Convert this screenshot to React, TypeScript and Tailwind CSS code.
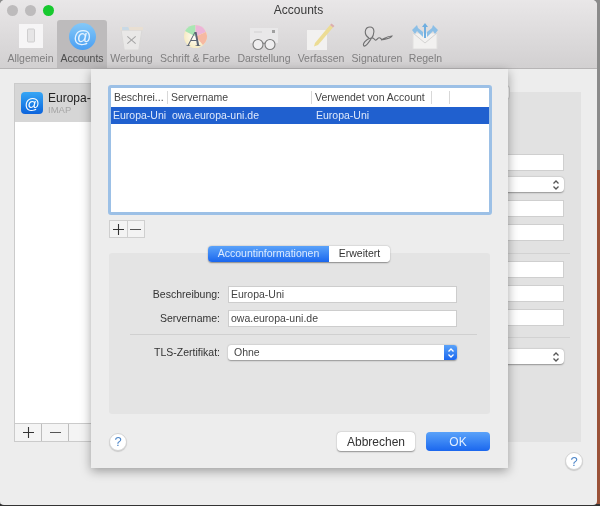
const font = { fontFamily: '"Liberation Sans", Arial, sans-serif' };

function AtIcon() {
  return (
    <svg width="40" height="40" viewBox="0 0 40 40">
      <defs>
        <linearGradient id="atg" x1="0" y1="0" x2="0" y2="1">
          <stop offset="0" stopColor="#84c8f8" />
          <stop offset="1" stopColor="#4a9ff2" />
        </linearGradient>
      </defs>
      <circle cx="20.500" cy="20.500" r="13.500" fill="url(#atg)" />
      <text x="20.500" y="26.500" textAnchor="middle" fontSize="18" fill="#e6f3ff" fontFamily="Liberation Sans">@</text>
    </svg>
  );
}

function GeneralIcon() {
  return (
    <svg width="24" height="24" viewBox="0 0 24 24">
      <rect width="24" height="24" fill="#f6f5f6" />
      <rect x="8.500" y="5" width="7" height="13" rx="1" fill="#e6e5e6" stroke="#cfcecf" />
    </svg>
  );
}

function TrashIcon() {
  return (
    <svg className="mt-[4px]" width="25" height="25" viewBox="0 0 24 24">
      <path d="M2 4h20l-3 19H5z" fill="#e9e8e7" stroke="#d9d8d7" />
      <path d="M1 1h22v3H1z" fill="#e9dfd2" />
      <path d="M3 1h6l1 3H3z" fill="#c8d9e6" />
      <path d="M8 10l8 7M16 10l-8 7" stroke="#a5a5a5" fill="none" />
    </svg>
  );
}

function FontIcon() {
  return (
    <svg className="mt-[1px] overflow-visible" width="23" height="23" viewBox="0 0 23 23">
      <defs>
        <radialGradient id="fg" cx="0.5" cy="0.5" r="0.6">
          <stop offset="0" stopColor="#ffffff" />
          <stop offset="1" stopColor="#f4e7b7" />
        </radialGradient>
      </defs>
      <circle cx="11.500" cy="11.500" r="11.500" fill="url(#fg)" />
      <path d="M11.500 11.500L11.500 0A11.500 11.500 0 0 0 1 6z" fill="#a9e6b4" />
      <path d="M11.500 11.500L11.500 0A11.500 11.500 0 0 1 22 7z" fill="#ecb5d8" />
      <path d="M11.500 11.500L22 7A11.500 11.500 0 0 1 19 20z" fill="#f6b9a2" />
      <text x="10" y="21" textAnchor="middle" fontSize="21" fontStyle="italic" fontFamily="Liberation Serif" fill="#5b6474">A</text>
    </svg>
  );
}

function GlassesIcon() {
  return (
    <svg className="mt-[6px]" width="28" height="23" viewBox="0 0 28 23">
      <rect x="0" y="0" width="28" height="15" fill="#e9e8e9" />
      <rect x="22" y="2" width="3" height="3" fill="#a0a0a0" />
      <rect x="4" y="3" width="8" height="2" fill="#dddcdd" />
      <circle cx="8" cy="16.500" r="5" fill="#efeeef" stroke="#7a7a7a" strokeWidth="1.100" />
      <circle cx="20" cy="16.500" r="5" fill="#efeeef" stroke="#7a7a7a" strokeWidth="1.100" />
      <path d="M13 15.500q1-1 2 0" stroke="#7a7a7a" fill="none" />
    </svg>
  );
}

function PencilIcon() {
  return (
    <svg width="28" height="28" viewBox="0 0 28 28">
      <rect x="0" y="8" width="20" height="20" fill="#f2f1f0" />
      <path d="M8 21L23 3l3 2.500L11 23l-4 1.500z" fill="#ecdc94" />
      <path d="M23 3l1.500-1.500 3 2.500L26 5.500z" fill="#dcaeae" />
    </svg>
  );
}

function SignatureIcon() {
  return (
    <svg className="mt-[3px]" width="32" height="24" viewBox="0 0 32 24">
      <path
        d="M8 12C2 8 4 1 9 1c5 0 5 7 1 12-2 3-5 8-7 7-2-2 2-7 7-8 4-1 3 3 5 2s2-3 4-2 1 2 3 1 5-3 9-3c-2 3-7 3-11 4"
        fill="none"
        stroke="#707071"
        strokeWidth="1.100"
      />
    </svg>
  );
}

function RulesIcon() {
  return (
    <svg className="-ml-[2px]" width="26" height="26" viewBox="0 0 26 26">
      <path d="M1 10h24v16H1z" fill="#f2f1f0" stroke="#e0dfde" />
      <path d="M1 10l12 10 12-10" fill="none" stroke="#d4d3d2" />
      <path d="M13 0l3 4h-2v11h-2V4h-2z" fill="#6eaee0" />
      <path d="M0 7l5-5 1 3 5 4v5L5 8 3 11z" fill="#8cbfe6" />
      <path d="M26 7l-5-5-1 3-5 4v5l6-6 2 3z" fill="#8cbfe6" />
    </svg>
  );
}

function Tool({ label, active, width, children }: { label: string; active?: boolean; width: string; children: React.ReactNode }) {
  return (
    <div className={`${width} h-[48px] flex flex-col items-center rounded-t-[3px] ${active ? "bg-[#bdbbbc]" : ""}`}>
      <div className="h-[32px] flex items-center justify-center">{children}</div>
      <span className={`text-[10.5px] leading-[12px] whitespace-nowrap ${active ? "text-[#4c4c4c]" : "text-[#7f7e7f]"}`}>{label}</span>
    </div>
  );
}

function BackInput({ select }: { select?: boolean }) {
  return (
    <div className={`w-full bg-white flex items-center justify-end pr-[4px] ${select ? "h-[15px] rounded-[4px] shadow-[0_0.5px_1.500px_rgba(0,0,0,0.35)]" : "h-[17px] border border-[#cfcfcf]"}`}>
      {select && <Stepper color="#555" />}
    </div>
  );
}

function Stepper({ color }: { color: string }) {
  return (
    <svg width="8" height="12" viewBox="0 0 8 12">
      <path d="M1.500 4.500L4 2l2.500 2.500M1.500 7.500L4 10l2.500-2.500" fill="none" stroke={color} strokeWidth="1.300" />
    </svg>
  );
}

function Plus() {
  return (
    <svg width="11" height="11" viewBox="0 0 11 11">
      <path d="M5.500 0v11M0 5.500h11" stroke="#333" strokeWidth="1.100" />
    </svg>
  );
}

function Minus() {
  return (
    <svg width="11" height="11" viewBox="0 0 11 11">
      <path d="M0 5.500h11" stroke="#555" strokeWidth="1.100" />
    </svg>
  );
}

function Help() {
  return (
    <div className="w-[18px] h-[18px] rounded-full bg-white border border-[#d4d4d4] shadow-[0_1px_1px_rgba(0,0,0,0.15)] flex items-center justify-center text-[13px] leading-none text-[#4d86c8]">
      ?
    </div>
  );
}

function Col({ w, label }: { w: string; label: string }) {
  return (
    <div className={`${w} h-[13px] border-r border-[#d8d8d8] pl-[3px] flex items-center text-[10.5px] text-[#444] whitespace-nowrap overflow-hidden`}>{label}</div>
  );
}

function FormRow({ label, children }: { label: string; children: React.ReactNode }) {
  return (
    <div className="flex items-center">
      <div className="w-[111px] text-right text-[10.5px] text-[#333]">{label}</div>
      <div className="ml-[8px]">{children}</div>
    </div>
  );
}

function Field({ value }: { value: string }) {
  return (
    <div className="w-[229px] h-[17px] bg-white border border-[#cdcdcd] pl-[2px] flex items-center text-[10.5px] text-[#444]">{value}</div>
  );
}

export default function App() {
  return (
    <div className="relative w-[600px] h-[506px] bg-[#8b8b8b] overflow-hidden blur-[0.5px]" style={font}>
      <div className="absolute right-0 top-[170px] w-[4px] h-[336px] bg-[#9a5238]" />
      <div className="absolute left-0 bottom-0 w-full h-[2px] bg-[#333]" />
      <div className="w-[597px] h-[505px] bg-[#ededed] rounded-b-[4px] rounded-t-[5px] flex flex-col overflow-hidden relative">
        {/* title bar + toolbar */}
        <div className="h-[69px] shrink-0 bg-gradient-to-b from-[#e9e7e8] to-[#d2d0d1] border-b border-[#b7b5b6] flex flex-col">
          <div className="h-[20px] relative flex items-center justify-center text-[12px] text-[#3a3a3a]">
            Accounts
            <div className="absolute left-[7px] top-[5px] flex gap-[7px]">
              <div className="w-[11px] h-[11px] rounded-full bg-[#bdbbbc]" />
              <div className="w-[11px] h-[11px] rounded-full bg-[#bdbbbc]" />
              <div className="w-[11px] h-[11px] rounded-full bg-[#17c92f]" />
            </div>
          </div>
          <div className="flex pl-[4px]">
            <Tool label="Allgemein" width="w-[53px]"><GeneralIcon /></Tool>
            <Tool label="Accounts" active width="w-[50px]"><AtIcon /></Tool>
            <Tool label="Werbung" width="w-[49px]"><TrashIcon /></Tool>
            <Tool label="Schrift & Farbe" width="w-[78px]"><FontIcon /></Tool>
            <Tool label="Darstellung" width="w-[60px]"><GlassesIcon /></Tool>
            <Tool label="Verfassen" width="w-[54px]"><PencilIcon /></Tool>
            <Tool label="Signaturen" width="w-[58px]"><SignatureIcon /></Tool>
            <Tool label="Regeln" width="w-[39px]"><RulesIcon /></Tool>
          </div>
        </div>

        {/* background content */}
        <div className="flex-1 flex pl-[14px] pr-[16px] pt-[14px] gap-[4px]">
          <div className="w-[238px] h-[359px] border border-[#cbcbcb] bg-white flex flex-col">
            <div className="h-[38px] bg-[#d6d6d6] flex items-center pl-[6px] gap-[5px]">
              <div className="w-[22px] h-[22px] rounded-[4px] bg-gradient-to-b from-[#37a6f5] to-[#0d63dc] flex items-center justify-center text-white text-[15px] leading-none">@</div>
              <div className="flex flex-col">
                <span className="text-[12px] leading-[14px] text-[#222]">Europa-Uni</span>
                <span className="text-[9.5px] leading-[10px] text-[#a5a5a5]">IMAP</span>
              </div>
            </div>
            <div className="flex-1" />
            <div className="h-[18px] border-t border-[#cbcbcb] bg-[#f4f4f4] flex">
              <div className="w-[27px] border-r border-[#bdbdbd] flex items-center justify-center"><Plus /></div>
              <div className="w-[27px] border-r border-[#bdbdbd] flex items-center justify-center"><Minus /></div>
            </div>
          </div>
          <div className="flex-1 flex flex-col relative">
            <div className="absolute left-[250px] top-[2px] w-[4px] h-[15px] bg-white rounded-r-[4px] border border-l-0 border-[#cfcfcf]" />
            <div className="h-[9px]" />
            <div className="h-[350px] bg-[#e2e2e2] pl-[60px] pr-[17px] pt-[62px] flex flex-col">
              <div className="flex flex-col">
                <BackInput />
                <div className="h-[6px]" />
                <BackInput select />
                <div className="h-[8px]" />
                <BackInput />
                <div className="h-[7px]" />
                <BackInput />
              </div>
              <div className="h-px bg-[#d2d2d2] mt-[12px] mb-[7px] -mr-[6px]" />
              <div className="flex flex-col gap-[7px]">
                <BackInput />
                <BackInput />
                <BackInput />
              </div>
              <div className="h-px bg-[#d2d2d2] mt-[11px] mb-[11px] -mr-[6px]" />
              <BackInput select />
            </div>
            <div className="flex justify-end mr-[-2px] mt-[10px]"><Help /></div>
          </div>
        </div>

        {/* sheet */}
        <div className="absolute left-[91px] top-[69px] w-[417px] h-[399px] bg-[#ededed] shadow-[0_3px_10px_rgba(0,0,0,0.35)] flex flex-col px-[17px] pt-[16px]">
          <div className="w-[384px] h-[130px] bg-white border-[3px] border-[#9cc0e6] rounded-[3px] flex flex-col shrink-0">
            <div className="h-[19px] flex items-center">
              <Col w="w-[57px]" label="Beschrei..." />
              <Col w="w-[144px]" label="Servername" />
              <Col w="w-[120px]" label="Verwendet von Account" />
              <div className="w-[18px] h-[13px] border-r border-[#d8d8d8]" />
            </div>
            <div className="h-[17px] bg-[#2060cf] flex items-center text-[10.5px] text-[#dfe9fb]">
              <span className="w-[61px] pl-[2px]">Europa-Uni</span>
              <span className="w-[144px]">owa.europa-uni.de</span>
              <span>Europa-Uni</span>
            </div>
          </div>

          <div className="mt-[5px] ml-[1px] w-[36px] h-[18px] border border-[#cfcfcf] bg-[#f3f3f3] flex shrink-0">
            <div className="flex-1 border-r border-[#cfcfcf] flex items-center justify-center"><Plus /></div>
            <div className="flex-1 flex items-center justify-center"><Minus /></div>
          </div>

          {/* group box */}
          <div className="relative mt-[15px] ml-[1px] w-[381px] h-[161px] bg-[#e4e4e4] rounded-[3px] pt-[33px] flex flex-col shrink-0">
            <div className="absolute left-[99px] -top-[7px] flex h-[16px] rounded-[4px] overflow-hidden shadow-[0_0.5px_1.500px_rgba(0,0,0,0.4)] text-[10.5px]">
              <div className="w-[121px] bg-gradient-to-b from-[#5aa2f9] to-[#1a66ee] text-[#dcebff] flex items-center justify-center">Accountinformationen</div>
              <div className="w-[61px] bg-white text-[#333] flex items-center justify-center">Erweitert</div>
            </div>
            <div className="flex flex-col gap-[7px]">
              <FormRow label="Beschreibung:"><Field value="Europa-Uni" /></FormRow>
              <FormRow label="Servername:"><Field value="owa.europa-uni.de" /></FormRow>
            </div>
            <div className="h-px bg-[#d0d0d0] ml-[21px] mr-[13px] mt-[7px] mb-[10px]" />
            <FormRow label="TLS-Zertifikat:">
              <div className="w-[229px] h-[15px] bg-white rounded-[3px] shadow-[0_0.5px_1.500px_rgba(0,0,0,0.35)] flex items-center justify-between text-[10.5px] text-[#444] pl-[6px]">
                <span>Ohne</span>
                <div className="w-[13px] h-full rounded-r-[3px] bg-gradient-to-b from-[#5aa2f9] to-[#1a66ee] flex items-center justify-center">
                  <Stepper color="#fff" />
                </div>
              </div>
            </FormRow>
          </div>

          <div className="flex items-center justify-between ml-[1px] mr-[1px] mt-[18px]">
            <Help />
            <div className="flex gap-[11px]">
              <div className="w-[78px] h-[19px] bg-white rounded-[4px] shadow-[0_0.5px_1.500px_rgba(0,0,0,0.4)] flex items-center justify-center text-[12px] text-[#333]">Abbrechen</div>
              <div className="w-[64px] h-[19px] rounded-[4px] bg-gradient-to-b from-[#5aa2f9] to-[#1a66ee] flex items-center justify-center text-[12px] text-[#e3efff]">OK</div>
            </div>
          </div>
        </div>
      </div>
    </div>
  );
}
